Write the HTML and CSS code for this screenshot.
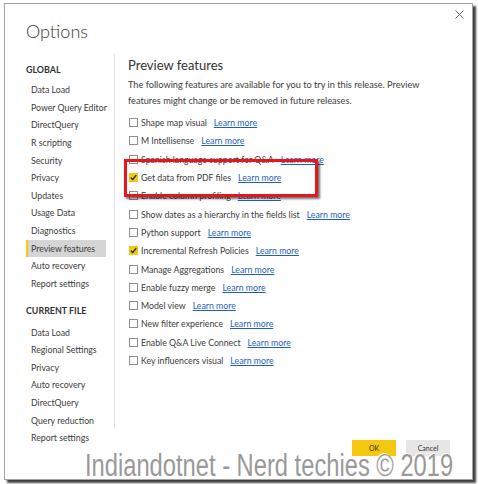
FILE: index.html
```html
<!DOCTYPE html>
<html>
<head>
<meta charset="utf-8">
<link rel="stylesheet" href="styles.css">
</head>
<body>
<div class="dialog">
  <header class="head">
    <h1 class="title">Options</h1>
    <span class="close"><svg width="9" height="9" viewBox="0 0 9 9"><path d="M0.5 0.5L8.5 8.5M8.5 0.5L0.5 8.5" stroke="#6a6a6a" stroke-width="1"/></svg></span>
  </header>
  <div class="main">
    <nav class="side">
      <div class="grp">GLOBAL</div>
      <div class="item">Data Load</div>
      <div class="item">Power Query Editor</div>
      <div class="item">DirectQuery</div>
      <div class="item">R scripting</div>
      <div class="item">Security</div>
      <div class="item">Privacy</div>
      <div class="item">Updates</div>
      <div class="item">Usage Data</div>
      <div class="item">Diagnostics</div>
      <div class="item active">Preview features</div>
      <div class="item">Auto recovery</div>
      <div class="item">Report settings</div>
      <div class="grp grp2">CURRENT FILE</div>
      <div class="item">Data Load</div>
      <div class="item">Regional Settings</div>
      <div class="item">Privacy</div>
      <div class="item">Auto recovery</div>
      <div class="item">DirectQuery</div>
      <div class="item">Query reduction</div>
      <div class="item">Report settings</div>
    </nav>
    <div class="col">
      <section class="panel">
        <h2 class="ptitle">Preview features</h2>
        <p class="desc">The following features are available for you to try in this release. Preview features might change or be removed in future releases.</p>
        <ul class="list">
          <li class="row"><span class="cb"></span><span class="lbl">Shape map visual</span><a class="lnk">Learn more</a></li>
          <li class="row"><span class="cb"></span><span class="lbl">M Intellisense</span><a class="lnk">Learn more</a></li>
          <li class="row"><span class="cb"></span><span class="lbl">Spanish language support for Q&amp;A</span><a class="lnk">Learn more</a></li>
          <li class="row"><span class="cb on"><svg width="9" height="9" viewBox="0 0 9 9"><path d="M1.8 4.6L3.7 6.5L7.3 2.2" fill="none" stroke="#222" stroke-width="1.3"/></svg></span><span class="lbl">Get data from PDF files</span><a class="lnk">Learn more</a></li>
          <li class="row"><span class="cb"></span><span class="lbl">Enable column profiling</span><a class="lnk">Learn more</a></li>
          <li class="row"><span class="cb"></span><span class="lbl">Show dates as a hierarchy in the fields list</span><a class="lnk">Learn more</a></li>
          <li class="row"><span class="cb"></span><span class="lbl">Python support</span><a class="lnk">Learn more</a></li>
          <li class="row"><span class="cb on"><svg width="9" height="9" viewBox="0 0 9 9"><path d="M1.8 4.6L3.7 6.5L7.3 2.2" fill="none" stroke="#222" stroke-width="1.3"/></svg></span><span class="lbl">Incremental Refresh Policies</span><a class="lnk">Learn more</a></li>
          <li class="row"><span class="cb"></span><span class="lbl">Manage Aggregations</span><a class="lnk">Learn more</a></li>
          <li class="row"><span class="cb"></span><span class="lbl">Enable fuzzy merge</span><a class="lnk">Learn more</a></li>
          <li class="row"><span class="cb"></span><span class="lbl">Model view</span><a class="lnk">Learn more</a></li>
          <li class="row"><span class="cb"></span><span class="lbl">New filter experience</span><a class="lnk">Learn more</a></li>
          <li class="row"><span class="cb"></span><span class="lbl">Enable Q&amp;A Live Connect</span><a class="lnk">Learn more</a></li>
          <li class="row"><span class="cb"></span><span class="lbl">Key influencers visual</span><a class="lnk">Learn more</a></li>
        </ul>
      </section>
      <footer class="foot">
        <span class="btn ok">OK</span>
        <span class="btn cancel">Cancel</span>
      </footer>
    </div>
  </div>
  <div class="annot"></div>
  <div class="watermark">Indiandotnet - Nerd techies © 2019</div>
</div>
</body>
</html>
```
FILE: styles.css
```css
html, body {
  margin: 0;
  padding: 0;
  background: #ffffff;
}
body {
  width: 478px;
  height: 484px;
  overflow: hidden;
  font-family: Lato, "Open Sans", sans-serif;
  color: #3c3c3c;
}
.dialog {
  position: relative;
  box-sizing: border-box;
  width: 469px;
  height: 477px;
  margin: 3px 0 0 4px;
  border: 1px solid #a3a3a3;
  background: #fff;
  box-shadow: 3px 3px 2px rgba(0, 0, 0, 0.75);
}
.head {
  display: flex;
  justify-content: space-between;
  align-items: flex-start;
  padding: 6px 8px 0 21px;
  height: 45px;
  box-sizing: border-box;
}
.title {
  margin: 9px 0 0 0;
  font-size: 18px;
  line-height: 24px;
  font-weight: 300;
  color: #3a3a3a;
}
.close {
  display: block;
  width: 9px;
  height: 9px;
}
.close svg { display: block; }
.main {
  display: flex;
  align-items: flex-start;
  padding-left: 21px;
  margin-top: 5px;
}
.side {
  width: 88px;
  padding-top: 7px;
  font-size: 8.75px;
}
.grp {
  font-weight: 700;
  font-size: 8.9px;
  line-height: 18px;
  height: 18px;
  margin-bottom: 2px;
  color: #333;
}
.grp2 {
  margin-top: 9px;
  margin-bottom: 4px;
}
.item {
  box-sizing: border-box;
  width: 80px;
  height: 17.64px;
  line-height: 17.64px;
  padding-left: 5px;
  white-space: nowrap;
  color: #3c3c3c;
}
.item.active {
  background: #d5d5d5;
  border-left: 2px solid #f2c811;
  padding-left: 3px;
}
.col {
  flex: 1;
  display: flex;
  flex-direction: column;
}
.panel {
  box-sizing: border-box;
  height: 375px;
  border-left: 1px solid #e3e3e3;
  padding: 2px 0 0 13px;
}
.ptitle {
  margin: 0;
  font-size: 13px;
  line-height: 18px;
  font-weight: 400;
  color: #333;
}
.desc {
  margin: 3px 0 0 0;
  font-size: 9.2px;
  line-height: 16px;
  width: 302px;
  color: #3c3c3c;
}
.list {
  list-style: none;
  margin: 4.5px 0 0 0;
  padding: 0;
}
.row {
  display: flex;
  align-items: center;
  height: 18.3px;
  font-size: 8.75px;
  white-space: nowrap;
}
.cb {
  box-sizing: border-box;
  width: 9px;
  height: 9px;
  border: 1px solid #8f8f8f;
  margin-left: 1px;
  margin-right: 3px;
  background: #fff;
}
.cb.on {
  border: none;
  background: #f2c811;
}
.cb svg { display: block; }
.lbl { color: #3c3c3c; }
.lnk {
  margin-left: 7px;
  color: #1f5fc0;
  text-decoration: underline;
}
.foot {
  display: flex;
  justify-content: flex-end;
  gap: 10px;
  margin-top: 11px;
  padding-right: 22px;
}
.btn {
  display: block;
  width: 44px;
  height: 16px;
  line-height: 16px;
  text-align: center;
  font-size: 7px;
  color: #333;
}
.ok { background: #f2c811; }
.cancel { background: #e6e6e6; }
.annot {
  position: absolute;
  left: 119px;
  top: 155px;
  width: 194px;
  height: 38px;
  box-sizing: border-box;
  border: 3px solid #e8161c;
  box-shadow: 2px 2px 2px rgba(0, 0, 0, 0.55);
}
.watermark {
  position: absolute;
  left: 80px;
  top: 446px;
  font-family: "Liberation Sans", Arial, sans-serif;
  font-size: 31px;
  line-height: 31px;
  white-space: nowrap;
  color: #999999;
  transform: scaleX(0.765);
  transform-origin: left top;
  text-shadow: 1px 1px 0 #fff, -1px -1px 0 #fff;
}
```
